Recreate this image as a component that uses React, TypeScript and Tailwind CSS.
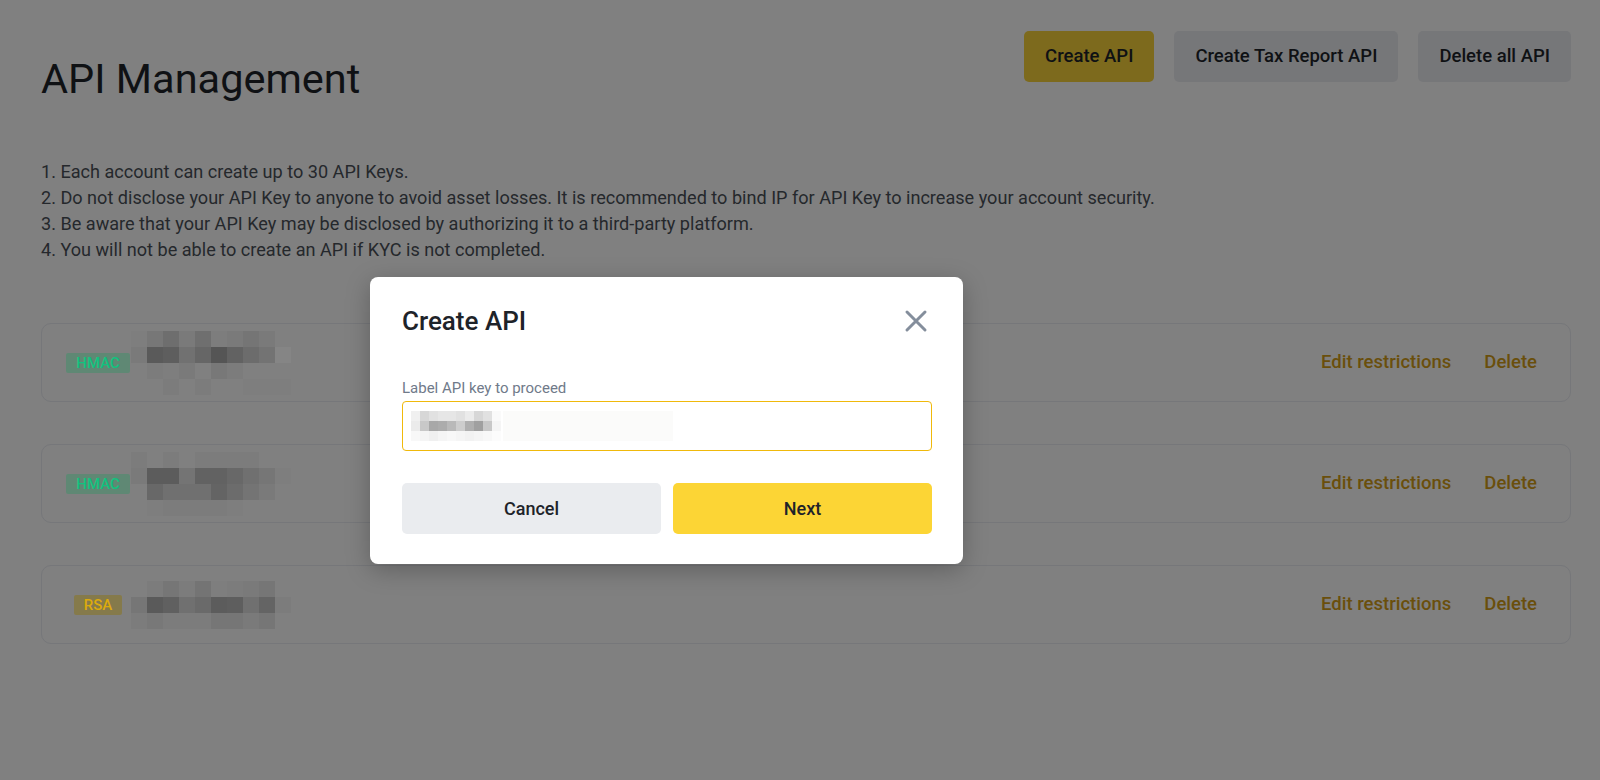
import React from "react";

type Cell = number | null;

function Mosaic({ rows, cw, ch, className }: { rows: Cell[][]; cw: number; ch: number; className?: string }) {
  const cols = Math.max(...rows.map((r) => r.length));
  return (
    <svg className={className} width={cols * cw} height={rows.length * ch} viewBox={`0 0 ${cols * cw} ${rows.length * ch}`}>
      {rows.map((r, y) =>
        r.map((v, x) =>
          v === null ? null : (
            <rect key={`${x}-${y}`} x={x * cw} y={y * ch} width={cw} height={ch} fill={`rgb(${v},${v},${v})`} />
          )
        )
      )}
    </svg>
  );
}

const mosaics: Cell[][][] = [
  [
    [126, 119, 110, 122, 111, 125, 122, 117, 122, null, null],
    [122, 90, 94, 113, 102, 85, 98, 108, 115, 133, null],
    [null, 124, 126, 122, null, 120, 124, null, null, null, null],
    [null, null, 124, null, 124, null, null, 126, 126, 126, null],
  ],
  [
    [124, null, 124, null, 124, 124, 124, 124, null, null],
    [122, 92, 92, 116, 98, 98, 104, 112, 118, 126],
    [null, 104, 112, 112, 112, 100, 108, 116, 122, null],
    [null, 126, 124, 124, 124, 124, 126, null, null, null],
  ],
  [
    [null, 124, 118, 124, 116, 126, 124, 122, 118, null],
    [118, 90, 96, 112, 106, 92, 94, 112, 100, 124],
    [124, 120, 124, 124, 124, 118, 118, 122, 118, null],
  ],
];

const inputMosaic: Cell[][] = [
  [240, 215, 225, 230, 230, 225, 235, 215, 225, 250],
  [235, 200, 168, 172, 185, 205, 175, 160, 200, 245],
  [248, 245, 240, 245, 248, 245, 242, 245, 248, 252],
];

const keys = [
  { type: "HMAC", m: 0 },
  { type: "HMAC", m: 1 },
  { type: "RSA", m: 2 },
];

export default function App() {
  return (
    <div className="relative w-[1600px] h-[780px] overflow-hidden bg-[#808080] font-['Roboto',sans-serif]">
      <div className="flex flex-col pl-[41px] pr-[29px] pt-[31px]">
        {/* Header */}
        <div className="flex items-start justify-between">
          <h1 className="mt-[24px] text-[41.5px] leading-[48px] font-normal text-[#0f1114]">API Management</h1>
          <div className="flex gap-[20px]">
            <button className="h-[51px] px-[21px] rounded-[5px] bg-[#7d6a1d] text-[18.5px] font-medium text-[#0f1114]">
              Create API
            </button>
            <button className="h-[51px] px-[21px] rounded-[5px] bg-[#767779] text-[18.5px] font-medium text-[#0f1114]">
              Create Tax Report API
            </button>
            <button className="h-[51px] px-[21px] rounded-[5px] bg-[#767779] text-[18.5px] font-medium text-[#0f1114]">
              Delete all API
            </button>
          </div>
        </div>

        {/* Instructions */}
        <div className="mt-[56px] text-[18.1px] leading-[26px] text-[#25282c]">
          <p>1. Each account can create up to 30 API Keys.</p>
          <p>
            2. Do not disclose your API Key to anyone to avoid asset losses. It is recommended to bind IP for API Key to
            increase your account security.
          </p>
          <p>3. Be aware that your API Key may be disclosed by authorizing it to a third-party platform.</p>
          <p>4. You will not be able to create an API if KYC is not completed.</p>
        </div>

        {/* Key list */}
        <div className="mt-[60px] flex flex-col gap-[42px]">
          {keys.map((k, i) => (
            <div
              key={i}
              className="flex h-[79px] items-center rounded-[10px] border border-[#76777a] pl-[24px] pr-[33px]"
            >
              <div className="flex w-[64px] justify-center">
                {k.type === "HMAC" ? (
                  <span className="h-[20px] rounded-[2px] bg-[#5f8874] px-[10px] text-[15px] leading-[20px] font-medium text-[#12c27f]">
                    HMAC
                  </span>
                ) : (
                  <span className="h-[20px] rounded-[2px] bg-[#857a4b] px-[10px] text-[15px] leading-[20px] font-medium text-[#dcaa0c]">
                    RSA
                  </span>
                )}
              </div>
              <Mosaic rows={mosaics[k.m]} cw={16} ch={16} className="ml-[1px]" />
              <div className="ml-auto flex gap-[33px] text-[18.5px] font-medium text-[#6a4f0c]">
                <span>Edit restrictions</span>
                <span>Delete</span>
              </div>
            </div>
          ))}
        </div>
      </div>

      {/* Modal */}
      <div className="absolute left-[370px] top-[277px] w-[593px] h-[287px] rounded-[8px] bg-white px-[32px] pr-[31px] pt-[28px] shadow-[0_6px_24px_rgba(0,0,0,0.25)]">
        <div className="flex items-center justify-between h-[32px]">
          <h2 className="text-[26px] leading-[32px] font-medium text-[#1e2329]">Create API</h2>
          <svg width="24" height="24" viewBox="0 0 24 24" className="mr-[4px]">
            <path d="M3 3 L21 21 M21 3 L3 21" stroke="#848e9c" strokeWidth="3" strokeLinecap="round" />
          </svg>
        </div>
        <div className="mt-[41px] text-[15px] leading-[20px] text-[#707a8a]">Label API key to proceed</div>
        <div className="mt-[3px] flex h-[50px] items-center rounded-[4px] border border-[#f0b90b] pl-[8px]">
          <div className="flex items-center">
            <Mosaic rows={inputMosaic} cw={9} ch={10} />
            <div className="ml-[2px] h-[30px] w-[170px] bg-[#fbfbfa]" />
          </div>
        </div>
        <div className="mt-[32px] flex gap-[12px]">
          <button className="h-[51px] flex-1 rounded-[5px] bg-[#eaecef] text-[18px] font-medium text-[#1e2329]">Cancel</button>
          <button className="h-[51px] flex-1 rounded-[5px] bg-[#fcd535] text-[18px] font-medium text-[#1e2329]">Next</button>
        </div>
      </div>
    </div>
  );
}
